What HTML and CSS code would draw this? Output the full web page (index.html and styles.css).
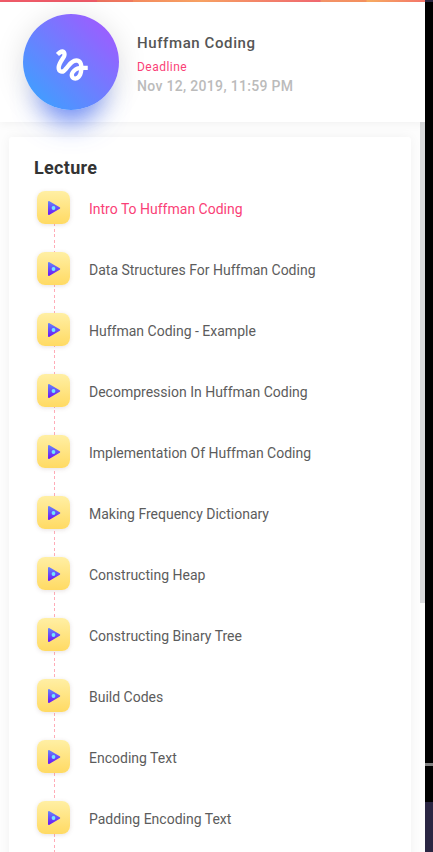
FILE: index.html
```html
<!DOCTYPE html>
<html lang="en">
<head>
<meta charset="utf-8">
<title>Huffman Coding</title>
<link rel="stylesheet" href="styles.css">
</head>
<body>
<svg class="defs" width="0" height="0" aria-hidden="true">
  <defs>
    <linearGradient id="play-fill" x1="0" y1="0" x2="0" y2="1">
      <stop offset="0" stop-color="#657dfb"/>
      <stop offset="1" stop-color="#6c1cf4"/>
    </linearGradient>
    <symbol id="play" viewBox="0 0 14 16">
      <path d="M2 2L12.2 8L2 14Z" fill="url(#play-fill)" stroke="url(#play-fill)" stroke-width="2" stroke-linejoin="round"/>
      <circle cx="6.5" cy="8" r="1.9" fill="#72e6ff"/>
    </symbol>
  </defs>
</svg>
<div class="app">
  <div class="sidebar">
    <div class="progress"></div>
    <header class="header">
      <div class="badge">
        <svg viewBox="0 0 24 24" width="42" height="42" fill="#fff"><path d="M4.59 6.89c.7-.71 1.4-1.35 1.71-1.22.5.2 0 1.03-.3 1.52-.25.42-2.86 3.89-2.86 6.31 0 1.28.48 2.34 1.34 2.98.75.56 1.74.73 2.64.46 1.07-.31 1.95-1.4 3.06-2.77 1.21-1.49 2.83-3.44 4.08-3.44 1.63 0 1.65 1.01 1.76 1.79-3.78.64-5.38 3.67-5.38 5.37 0 1.7 1.44 3.09 3.21 3.09 1.63 0 4.29-1.33 4.69-6.1H21v-2.5h-2.47c-.15-1.65-1.09-4.2-4.03-4.2-2.25 0-4.18 1.91-4.94 2.84-.58.73-2.06 2.48-2.29 2.72-.25.3-.68.84-1.11.84-.45 0-.72-.83-.36-1.92.35-1.09 1.4-2.86 1.85-3.52.78-1.14 1.3-1.92 1.3-3.28C8.95 3.69 7.31 3 6.44 3 5.12 3 3.97 4 3.72 4.25c-.36.36-.66.66-.88.93l1.75 1.71zm9.29 11.66c-.31 0-.74-.26-.74-.72 0-.6.73-2.2 2.87-2.76-.3 2.69-1.43 3.48-2.13 3.48z"/></svg>
      </div>
      <div class="info">
        <div class="title">Huffman Coding</div>
        <div class="label">Deadline</div>
        <div class="date">Nov 12, 2019, 11:59 PM</div>
      </div>
    </header>
    <div class="body">
      <main class="card">
        <h2>Lecture</h2>
        <ul class="list">
          <li class="active"><span class="tile"><svg><use href="#play"/></svg></span><span>Intro To Huffman Coding</span></li>
          <li><span class="tile"><svg><use href="#play"/></svg></span><span>Data Structures For Huffman Coding</span></li>
          <li><span class="tile"><svg><use href="#play"/></svg></span><span>Huffman Coding - Example</span></li>
          <li><span class="tile"><svg><use href="#play"/></svg></span><span>Decompression In Huffman Coding</span></li>
          <li><span class="tile"><svg><use href="#play"/></svg></span><span>Implementation Of Huffman Coding</span></li>
          <li><span class="tile"><svg><use href="#play"/></svg></span><span>Making Frequency Dictionary</span></li>
          <li><span class="tile"><svg><use href="#play"/></svg></span><span>Constructing Heap</span></li>
          <li><span class="tile"><svg><use href="#play"/></svg></span><span>Constructing Binary Tree</span></li>
          <li><span class="tile"><svg><use href="#play"/></svg></span><span>Build Codes</span></li>
          <li><span class="tile"><svg><use href="#play"/></svg></span><span>Encoding Text</span></li>
          <li><span class="tile"><svg><use href="#play"/></svg></span><span>Padding Encoding Text</span></li>
        </ul>
      </main>
      <div class="scrollbar"></div>
    </div>
  </div>
  <div class="player">
    <div class="player-top"></div>
    <div class="video"></div>
    <div class="track"></div>
    <div class="controls"></div>
    <div class="player-foot"></div>
  </div>
</div>
</body>
</html>
```
FILE: styles.css
```css
* { box-sizing: border-box; }
body {
  margin: 0;
  font-family: Roboto, "Liberation Sans", sans-serif;
  background: #fff;
}
.defs { display: block; height: 0; }
.app {
  display: flex;
  height: 852px;
  overflow: hidden;
}
.sidebar {
  width: 425px;
  display: flex;
  flex-direction: column;
  overflow: hidden;
}
.progress {
  flex: none;
  height: 2px;
  background: linear-gradient(90deg, #f25c6a 0, #f25c6a 97px, #ef7460 97px, #f47b60 133px, #f88d60 133px, #fba464 200px, #f46a72 320px, #f7956a 321px, #f8925f 366px, #fbaf62 367px, #f8776d 425px);
}
.header {
  flex: none;
  height: 120px;
  position: relative;
  z-index: 1;
  display: flex;
  align-items: flex-start;
  padding: 12px 22px 0 22.5px;
  background: #fff;
  box-shadow: 0 1px 10px rgba(0, 0, 0, .06);
}
.badge {
  flex: none;
  width: 96px;
  height: 96px;
  border-radius: 50%;
  display: flex;
  align-items: center;
  justify-content: center;
  padding: 5px 0 0 2px;
  background: linear-gradient(45deg, #3f9fff 10%, #6f7dff 50%, #a259ff 93%);
  box-shadow: 0 30px 28px -18px rgba(50, 95, 255, .7), 0 4px 30px rgba(0, 0, 0, .13);
}
.info { padding: 20px 0 0 18.5px; white-space: nowrap; }
.title {
  font-size: 15px;
  font-weight: 500;
  line-height: 18px;
  letter-spacing: .6px;
  color: #555;
}
.label {
  margin-top: 7px;
  font-size: 12px;
  line-height: 16px;
  letter-spacing: .48px;
  color: #fa3f77;
}
.date {
  margin-top: 2px;
  font-size: 14px;
  font-weight: 500;
  line-height: 18px;
  letter-spacing: .32px;
  color: #bbb;
}
.body {
  flex: 1;
  min-height: 0;
  display: flex;
  justify-content: space-between;
  padding-left: 9px;
  background: #fdfdfd;
}
.card {
  width: 402px;
  height: 760px;
  margin-top: 15px;
  padding: 21px 25px 0;
  border-radius: 3px;
  background: #fff;
  box-shadow: 0 0 12px rgba(0, 0, 0, .05);
}
h2 {
  margin: 0;
  font-size: 18px;
  line-height: 20px;
  font-weight: 700;
  letter-spacing: .3px;
  color: #333;
}
.list {
  margin: 13px 0 0 3px;
  padding: 0;
  list-style: none;
  background: repeating-linear-gradient(180deg, #ffacb7 0, #ffacb7 3px, transparent 3px, transparent 5.5px) 17px 5px / 1px 100% no-repeat;
}
.list li {
  height: 61px;
  display: flex;
  align-items: flex-start;
  gap: 19px;
  font-size: 14px;
  line-height: 37px;
  color: #5c5c5c;
}
.list .active { color: #fa3f77; }
.tile {
  width: 33px;
  height: 33px;
  border-radius: 8px;
  display: flex;
  align-items: center;
  justify-content: center;
  padding-left: 1px;
  background: linear-gradient(180deg, #ffefa4, #ffda63);
  box-shadow: 0 1px 4px rgba(120, 90, 90, .18);
}
.tile svg { width: 14px; height: 16px; }
.scrollbar { width: 5px; height: 481px; background: #dadbdd; }
.player {
  flex: 1;
  display: flex;
  flex-direction: column;
  background: #000;
}
.player-top { height: 2px; background: #2a2540; }
.video { height: 761px; }
.track { height: 3px; background: #808080; }
.controls { height: 36px; }
.player-foot { flex: 1; background: #2a2542; }
```
